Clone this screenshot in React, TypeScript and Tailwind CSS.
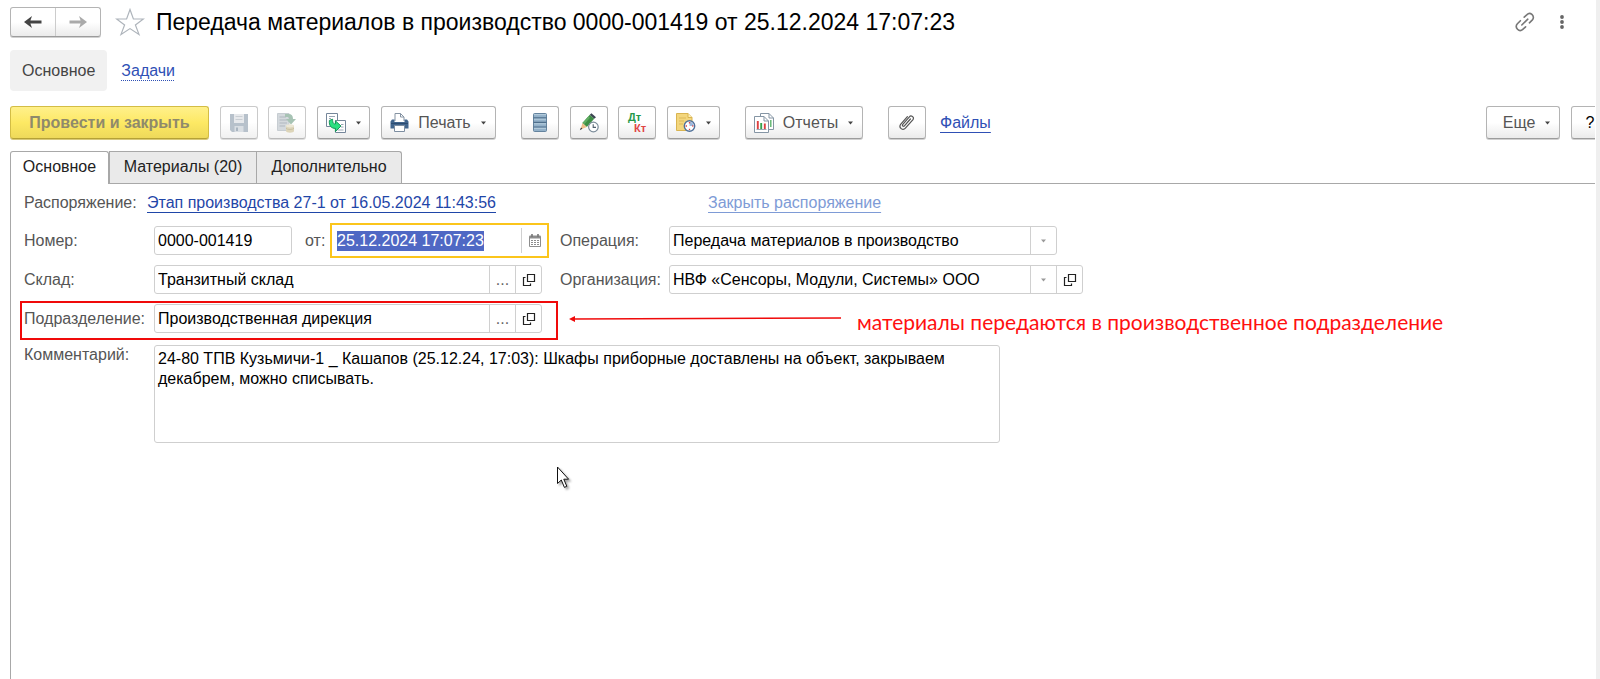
import { useEffect, useRef, useState } from 'react';
import type { ReactNode } from 'react';

const BTN =
  'flex h-[33px] shrink-0 items-center justify-center rounded-[3px] border border-[#b4b4b4] border-b-[#9c9c9c] bg-linear-to-b from-white from-50% to-[#ebebeb] text-[#555] shadow-[0_1px_0_#d0d0d0]';
const FIELD = 'flex h-[29px] items-stretch rounded-[3px] border border-[#cfcfcf] bg-white';
const INPUT = 'min-w-0 flex-1 bg-transparent px-[3px] text-black outline-none';
const SIDE = 'flex w-[26px] shrink-0 items-center justify-center border-l border-[#d0d0d0] text-[#666]';

function Caret({ light = false }: { light?: boolean }) {
  return (
    <svg width="7" height="4" viewBox="0 0 7 4" className={light ? 'text-[#9a9a9a]' : 'text-[#444]'} aria-hidden="true">
      <path d="M1 0.5h5L3.5 3.5z" fill="currentColor" />
    </svg>
  );
}

function OpenIcon() {
  return (
    <svg width="14" height="14" viewBox="0 0 14 14" fill="none" stroke="#222" strokeWidth="1.2" aria-hidden="true">
      <path d="M5.5 1.5h7v7h-7z" />
      <path d="M3.5 4.5h-2v8h7v-2" />
    </svg>
  );
}

function ArrowIcon({ flip = false }: { flip?: boolean }) {
  return (
    <svg width="18" height="14" viewBox="0 0 18 14" className={flip ? 'rotate-180 text-[#aaa]' : 'text-[#444]'} aria-hidden="true">
      <path d="M0 7L8 1L6.4 5.6H17.5V8.4H6.4L8 13z" fill="currentColor" />
    </svg>
  );
}

function StarIcon() {
  return (
    <svg width="30" height="28" viewBox="0 0 30 28" fill="none" stroke="#aeb4bb" strokeWidth="1.2" aria-hidden="true">
      <path d="M15 1.5L18.4 11H28.4L20.4 16.9L24 26.4L15 20.6L6 26.4L9.6 16.9L1.6 11H11.6z" />
    </svg>
  );
}

function LinkIcon() {
  return (
    <svg width="20" height="20" viewBox="0 0 20 20" fill="none" stroke="#777" strokeWidth="1.6" strokeLinecap="round" aria-hidden="true">
      <path d="M9.2 5.2L12 2.6C13.4 1.2 15.4 1.1 16.9 2.4C18.6 3.9 18.9 6.3 17.4 7.9L14.4 10.8" />
      <path d="M5.4 8.7L2.4 11.8C0.9 13.5 1 15.6 2.5 17.2C4 18.8 6.2 18.9 7.8 17.4L10.6 14.8" />
      <path d="M6.8 13L12.8 7.2" />
    </svg>
  );
}

function SaveIcon() {
  return (
    <svg width="18" height="18" viewBox="0 0 18 18" aria-hidden="true">
      <path d="M0 0H18V18H2L0 16z" fill="#9aa8b6" />
      <path d="M4 0H14V9H4z" fill="#dde1e5" />
      <path d="M5.5 2.5H12.5M5.5 5.5H12.5" stroke="#b3bac1" />
      <path d="M4.5 12H13.5V18H4.5z" fill="#c9d1d8" />
      <path d="M6 13.5H8V17H6z" fill="#8797a6" />
    </svg>
  );
}

function PostIcon() {
  return (
    <svg width="20" height="20" viewBox="0 0 20 20" aria-hidden="true">
      <path d="M0.5 0.5H12V17.5H0.5z" fill="#c2c9cf" stroke="#b0b8c0" />
      <path d="M2.5 4H9M2.5 7H10M2.5 10H10M2.5 13H8" stroke="#909ba5" />
      <path d="M8 1H11.5C14.6 1 16 2.8 16 6H19L14 11.5L9 6H12C12 4.6 11.4 4 10 4H8z" fill="#82aa95" />
      <path d="M9 12.5V18C9 20.3 17 20.3 17 18V12.5z" fill="#cfc49c" />
      <ellipse cx="13" cy="12.8" rx="4" ry="1.6" fill="#e4ddc4" />
      <path d="M9 15.2C10 17 16 17 17 15.2" stroke="#b5a980" fill="none" />
    </svg>
  );
}

function CreateFromIcon() {
  return (
    <svg width="20" height="20" viewBox="0 0 20 20" aria-hidden="true">
      <path d="M0.5 0.5H11.5V13.5H0.5z" fill="#fff" stroke="#75869a" />
      <path d="M3 3.5H9M3 5.5H5" stroke="#9aa7b5" />
      <path d="M9.5 7.5H19.5V19.5H9.5z" fill="#fff" stroke="#75869a" />
      <path d="M15 11.5H17.5M15 14H17.5M11.5 17H17.5" stroke="#9aa7b5" />
      <path d="M3.4 7.4L6.6 6.2C6.6 9.8 7.4 11 9.4 11V7.8L15 13L9.4 18.6V15.4C5.4 15.4 2.8 13 3.4 7.4z" fill="#2bdf80" stroke="#0d8d51" strokeWidth="0.9" />
    </svg>
  );
}

function PrinterIcon() {
  return (
    <svg width="19" height="19" viewBox="0 0 19 19" aria-hidden="true">
      <path d="M5 8V0.5H10.5L14 4V8" fill="#fff" stroke="#8593a2" />
      <path d="M10.5 0.5V4H14" fill="none" stroke="#8593a2" />
      <path d="M2 6.5H4.5V9H14.5V6.5H17L18.5 8.5V15.5H0.5V8.5z" fill="#41658d" />
      <path d="M1 10.5H18" stroke="#2d4c70" />
      <path d="M4.5 12.5H14.5V18.5H4.5z" fill="#fff" stroke="#7c8da0" />
    </svg>
  );
}

function ListIcon() {
  return (
    <svg width="14" height="19" viewBox="0 0 14 19" aria-hidden="true">
      <rect x="0.5" y="0.5" width="13" height="18" rx="1" fill="#93b1c9" stroke="#64839e" />
      <path d="M0.5 4.8H13.5M0.5 9.4H13.5M0.5 14H13.5" stroke="#4f6f8c" strokeWidth="1.2" />
      <path d="M1 1.6H13M1 6.2H13M1 10.8H13M1 15.4H13" stroke="#b6cddd" />
    </svg>
  );
}

function PencilClockIcon() {
  return (
    <svg width="20" height="20" viewBox="0 0 20 20" aria-hidden="true">
      <path d="M3.4 10L10.8 1.8L15.2 5.8L7.8 14z" fill="#3f8f45" />
      <path d="M3.4 10L9.4 3.4L11 4.8L5 11.5z" fill="#61ad62" />
      <path d="M10.8 1.8L12.4 0.2L17 4.2L15.2 5.8z" fill="#3b4552" />
      <path d="M3.4 10L7.8 14L1.6 16.4z" fill="#f0bf8c" />
      <path d="M0.8 17.2L3.4 15.8L2 14.4z" fill="#2f3339" />
      <circle cx="14.4" cy="14" r="4.8" fill="#fff" stroke="#7c8c9a" strokeWidth="1.2" />
      <path d="M14.2 11.2V14.4H17" fill="none" stroke="#51606e" strokeWidth="1.1" />
    </svg>
  );
}

function TaskClockIcon() {
  return (
    <svg width="20" height="19" viewBox="0 0 20 19" aria-hidden="true">
      <path d="M0.5 0.5H12L16 4.5V17.5H0.5z" fill="#f3d67d" stroke="#d9b451" />
      <path d="M12 0.5V4.5H16" fill="#fff0b9" stroke="#d9b451" />
      <path d="M3 5H10M3 8H8M3 11H7" stroke="#dcb95b" />
      <circle cx="13.5" cy="13" r="5.2" fill="#fff" stroke="#4f7099" strokeWidth="1.4" />
      <path d="M13.5 13V8.8A4.2 4.2 0 0 1 17.5 13z" fill="#9db9dc" />
      <path d="M13.5 9V10.4M13.5 15.8V17M9.6 13H11M16.2 13H17.4" stroke="#e04848" strokeWidth="1.3" />
    </svg>
  );
}

function ReportsIcon() {
  return (
    <svg width="20" height="20" viewBox="0 0 20 20" aria-hidden="true">
      <path d="M6.5 0.5H15L19.5 5V16.5H6.5z" fill="#fff" stroke="#8595a4" />
      <path d="M15 0.5V5H19.5" fill="none" stroke="#8595a4" />
      <path d="M16.8 7V14" stroke="#5db46c" strokeWidth="1.4" />
      <path d="M0.5 3.5H10L14.5 8V19.5H0.5z" fill="#fff" stroke="#8595a4" />
      <path d="M10 3.5V8H14.5" fill="none" stroke="#8595a4" />
      <path d="M3.8 8V16M10.8 10.5V16" stroke="#dd4141" strokeWidth="1.9" />
      <path d="M7.2 10V16" stroke="#36a34e" strokeWidth="1.9" />
      <path d="M2.5 16.5H12.5" stroke="#9ba8b3" />
    </svg>
  );
}

function ClipIcon() {
  return (
    <svg width="16" height="17" viewBox="0 0 16 17" fill="none" stroke="#555" strokeWidth="1.2" strokeLinecap="round" aria-hidden="true">
      <path d="M11.4 5L5.4 11.8C4.4 13 2.8 11.7 3.8 10.4L10.4 2.8C12 1 15.6 2.8 14 5.6L6.4 14.2C3.8 17 -0.6 13.8 1.6 10.4L8.4 2.6" />
    </svg>
  );
}

function CalendarIcon() {
  return (
    <svg width="12" height="13" viewBox="0 0 12 13" aria-hidden="true">
      <path d="M0.5 2.5H11.5V12.5H0.5z" fill="#fff" stroke="#8d8d8d" />
      <path d="M0.5 1.5H11.5V4.5H0.5z" fill="#8d8d8d" />
      <path d="M3 0V3M9 0V3" stroke="#777" strokeWidth="1.6" />
      <path d="M2 6.5H10M2 8.5H10M2 10.5H10" stroke="#8d8d8d" strokeDasharray="2 1" />
    </svg>
  );
}

function Pointer() {
  return (
    <svg width="14" height="24" viewBox="0 0 14 24" className="drop-shadow-[2px_2px_1px_rgba(0,0,0,0.35)]" aria-hidden="true">
      <path d="M0.5 1V17.5L4.3 14L7.4 21.4L9.8 20.3L6.8 13.2H11.6z" fill="#fff" stroke="#111" strokeWidth="1" />
    </svg>
  );
}

function ToolButton({ label, children, className }: { label: string; children: ReactNode; className: string }) {
  return (
    <button type="button" aria-label={label} className={`${BTN} ${className}`}>
      {children}
    </button>
  );
}

function Row({ id, label, children }: { id: string; label: string; children: ReactNode }) {
  return (
    <div className="flex h-[29px] items-center">
      <label htmlFor={id} className="w-[130px] shrink-0 text-[#555]">
        {label}
      </label>
      {children}
    </div>
  );
}

function Reference({ id, initial }: { id: string; initial: string }) {
  const [value, setValue] = useState(initial);
  return (
    <div className={`${FIELD} w-[388px]`}>
      <input id={id} className={INPUT} value={value} onChange={(e) => setValue(e.target.value)} />
      <button type="button" aria-label="Выбрать" className={SIDE}>...</button>
      <button type="button" aria-label="Открыть" className={SIDE}><OpenIcon /></button>
    </div>
  );
}

function Choice({ id, label, value, open = false }: { id: string; label: string; value: string; open?: boolean }) {
  return (
    <div className="flex h-[29px] items-center">
      <label htmlFor={id} className="w-[109px] shrink-0 text-[#555]">
        {label}
      </label>
      <div className={FIELD}>
        <div className="grid w-[386px] grid-cols-[1fr_26px]">
          <select id={id} className="col-span-2 col-start-1 row-start-1 appearance-none bg-transparent px-[3px] text-black outline-none">
            <option>{value}</option>
          </select>
          <span className="pointer-events-none col-start-2 row-start-1 flex items-center justify-center border-l border-[#d0d0d0]">
            <Caret light />
          </span>
        </div>
        {open && (
          <button type="button" aria-label="Открыть" className={SIDE}><OpenIcon /></button>
        )}
      </div>
    </div>
  );
}

export default function App() {
  const dateRef = useRef<HTMLInputElement>(null);
  useEffect(() => {
    dateRef.current?.focus();
    dateRef.current?.select();
  }, []);

  return (
    <div className="flex min-h-screen bg-white font-['Liberation_Sans',Arial,sans-serif] text-[16px] leading-5">
      <main className="flex min-w-0 flex-1 flex-col overflow-hidden pl-[10px]">
        <header className="mt-[7px] flex h-[30px] items-center">
          <div className="flex h-[30px] w-[91px] rounded-[3px] border border-[#b4b4b4] border-b-[#9c9c9c] bg-linear-to-b from-white from-50% to-[#ebebeb] shadow-[0_1px_0_#d0d0d0]">
            <button type="button" aria-label="Назад" className="flex flex-1 items-center justify-center border-r border-[#ccc]"><ArrowIcon /></button>
            <button type="button" aria-label="Вперед" className="flex flex-1 items-center justify-center"><ArrowIcon flip /></button>
          </div>
          <button type="button" aria-label="В избранное" className="ml-[14px]"><StarIcon /></button>
          <h1 className="ml-[11px] text-[23px] leading-[30px] whitespace-nowrap text-black">
            Передача материалов в производство 0000-001419 от 25.12.2024 17:07:23
          </h1>
          <div className="mr-[31px] ml-auto flex items-center gap-[25px]">
            <button type="button" aria-label="Получить ссылку"><LinkIcon /></button>
            <button type="button" aria-label="Меню">
              <svg width="4" height="14" viewBox="0 0 4 14" fill="#666" aria-hidden="true">
                <circle cx="2" cy="2" r="1.9" />
                <circle cx="2" cy="7" r="1.9" />
                <circle cx="2" cy="12" r="1.9" />
              </svg>
            </button>
          </div>
        </header>

        <nav className="mt-[13px] flex h-[41px] items-center gap-[14px]">
          <a href="#main" className="flex h-[41px] items-center rounded-[4px] bg-[#f1f1f1] px-3 text-[#444]">Основное</a>
          <a href="#tasks" className="text-[#2f50b5] underline decoration-dotted decoration-1 underline-offset-4">Задачи</a>
        </nav>

        <div className="mt-[15px] flex items-center">
          <button type="button" className="h-[33px] w-[199px] shrink-0 rounded-[3px] border border-[#d3bd45] border-b-[#b5a136] bg-linear-to-b from-[#fff08a] via-[#fde964] to-[#eed95a] font-bold text-[#8f8a6b] shadow-[0_1px_0_#d8c97a]">
            Провести и закрыть
          </button>
          <button type="button" disabled aria-label="Записать" className={`${BTN} ml-[11px] w-[38px] opacity-70`}><SaveIcon /></button>
          <button type="button" disabled aria-label="Провести" className={`${BTN} ml-[10px] w-[38px] opacity-70`}><PostIcon /></button>
          <ToolButton label="Создать на основании" className="ml-[11px] w-[53px] gap-[9px]"><CreateFromIcon /><Caret /></ToolButton>
          <ToolButton label="Печать" className="ml-[11px] w-[115px] gap-[9px]"><PrinterIcon />Печать<Caret /></ToolButton>
          <ToolButton label="Список" className="ml-[25px] w-[38px]"><ListIcon /></ToolButton>
          <ToolButton label="Отложенная правка" className="ml-[11px] w-[38px]"><PencilClockIcon /></ToolButton>
          <ToolButton label="Проводки" className="ml-[10px] w-[38px]">
            <span className="flex flex-col text-left text-[11px] leading-[11px] font-bold">
              <span className="text-[#26994a]">Дт</span>
              <span className="pl-[6px] text-[#e04545]">Кт</span>
            </span>
          </ToolButton>
          <ToolButton label="Задачи" className="ml-[11px] w-[53px] gap-[9px]"><TaskClockIcon /><Caret /></ToolButton>
          <ToolButton label="Отчеты" className="ml-[25px] w-[118px] gap-[9px]"><ReportsIcon />Отчеты<Caret /></ToolButton>
          <ToolButton label="Прикрепить" className="ml-[25px] w-[38px]"><ClipIcon /></ToolButton>
          <a href="#files" className="ml-[14px] text-[#2f50b5] underline decoration-1 underline-offset-4">Файлы</a>
          <div className="-mr-[14px] ml-auto flex gap-[11px]">
            <ToolButton label="Еще" className="w-[74px] gap-[9px] pl-2">Еще<Caret /></ToolButton>
            <ToolButton label="Справка" className="w-[38px] text-black">?</ToolButton>
          </div>
        </div>

        <div role="tablist" className="mt-3 flex">
          <button type="button" role="tab" aria-selected="true" className="z-10 -mb-px h-[33px] w-[99px] rounded-t-[3px] border border-b-0 border-[#a8a8a8] bg-white pb-[2px] text-[#222]">Основное</button>
          <button type="button" role="tab" aria-selected="false" className="h-8 w-[148px] border border-b-0 border-[#a8a8a8] bg-[#eaeaea] pb-[2px] text-[#222]">Материалы (20)</button>
          <button type="button" role="tab" aria-selected="false" className="-ml-px h-8 w-[146px] rounded-tr-[3px] border border-b-0 border-[#a8a8a8] bg-[#eaeaea] pb-[2px] text-[#222]">Дополнительно</button>
        </div>

        <section className="flex-1 border-t border-l border-[#a8a8a8] pl-[13px]">
          <div className="mt-[9px] flex h-5 items-center text-[#555]">
            <span className="w-[123px]">Распоряжение:</span>
            <span className="w-[561px]">
              <a href="#order" className="text-[#1f46a8] underline decoration-1 underline-offset-4">Этап производства 27-1 от 16.05.2024 11:43:56</a>
            </span>
            <a href="#close" className="text-[#7e9bd6] underline decoration-1 underline-offset-4">Закрыть распоряжение</a>
          </div>

          <div className="mt-[13px] flex">
            <div className="flex w-[536px] shrink-0 flex-col gap-[10px]">
              <Row id="number" label="Номер:">
                <div className={`${FIELD} w-[138px]`}>
                  <input id="number" className={INPUT} defaultValue="0000-001419" />
                </div>
                <label htmlFor="date" className="w-[38px] pl-[13px] text-[#555]">от:</label>
                <div className="-my-[3px] flex h-[35px] w-[219px] shrink-0 border-2 border-[#fbc51b] bg-white py-[3px]">
                  <input
                    id="date"
                    ref={dateRef}
                    className="min-w-0 flex-1 bg-transparent px-[5px] text-black outline-none selection:bg-[#4f68c4] selection:text-white"
                    defaultValue="25.12.2024 17:07:23"
                  />
                  <button type="button" aria-label="Календарь" className={SIDE}><CalendarIcon /></button>
                </div>
              </Row>
              <Row id="warehouse" label="Склад:">
                <Reference id="warehouse" initial="Транзитный склад" />
              </Row>
              <div className="relative">
                <Row id="department" label="Подразделение:">
                  <Reference id="department" initial="Производственная дирекция" />
                </Row>
                <div className="pointer-events-none absolute -top-[3px] -left-1 h-[39px] w-[538px] border-2 border-[#f00a0a]" />
              </div>
            </div>
            <div className="flex flex-1 flex-col gap-[10px]">
              <Choice id="operation" label="Операция:" value="Передача материалов в производство" />
              <Choice id="organization" label="Организация:" value="НВФ «Сенсоры, Модули, Системы» ООО" open />
              <div className="flex h-[29px] items-start gap-4 pl-[9px]">
                <svg width="272" height="29" viewBox="0 0 272 29" className="shrink-0" aria-hidden="true">
                  <path d="M4 15L272 14" stroke="#f00a0a" strokeWidth="1.6" />
                  <path d="M0 15L6 12V18z" fill="#f00a0a" />
                </svg>
                <p className="pt-[6px] font-['Lato','Open_Sans',sans-serif] text-[21px] leading-6 whitespace-nowrap text-[#ff1010]">
                  материалы передаются в производственное подразделение
                </p>
              </div>
            </div>
          </div>

          <div className="mt-3 flex items-start">
            <label htmlFor="comment" className="w-[130px] shrink-0 text-[#555]">Комментарий:</label>
            <textarea
              id="comment"
              className="h-[98px] w-[846px] resize-none rounded-[3px] border border-[#cfcfcf] px-[3px] py-[3px] text-black outline-none"
              defaultValue="24-80 ТПВ Кузьмичи-1 _ Кашапов (25.12.24, 17:03): Шкафы приборные доставлены на объект, закрываем декабрем, можно списывать."
            />
          </div>
        </section>
      </main>
      <div className="pointer-events-none absolute top-[466px] left-[557px]"><Pointer /></div>
      <div className="ml-px w-1 shrink-0 bg-[#efefef]" />
    </div>
  );
}
